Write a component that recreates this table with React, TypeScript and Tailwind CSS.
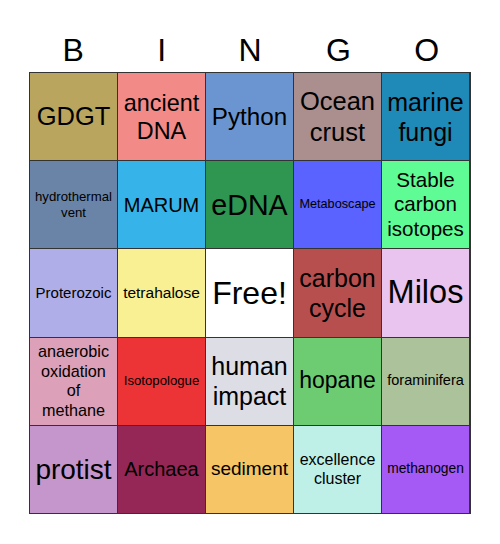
import React from 'react';

type Cell = { text: string; bg: string; size: string };

const cells: Cell[] = [
  { text: 'GDGT', bg: 'bg-[#b9a55d]', size: 'text-[25.5px]' },
  { text: 'ancient DNA', bg: 'bg-[#f28a87]', size: 'text-[23.4px]' },
  { text: 'Python', bg: 'bg-[#6a95d0]', size: 'text-[24.2px]' },
  { text: 'Ocean crust', bg: 'bg-[#ab8f8f]', size: 'text-[25.5px]' },
  { text: 'marine fungi', bg: 'bg-[#1f8ab8]', size: 'text-[25px]' },

  { text: 'hydrothermal vent', bg: 'bg-[#6a84a8]', size: 'text-[13.2px]' },
  { text: 'MARUM', bg: 'bg-[#36b3e8]', size: 'text-[20px]' },
  { text: 'eDNA', bg: 'bg-[#2e9650]', size: 'text-[28.6px]' },
  { text: 'Metaboscape', bg: 'bg-[#5a62ff]', size: 'text-[12.7px]' },
  { text: 'Stable carbon isotopes', bg: 'bg-[#5ffc96]', size: 'text-[20.6px]' },

  { text: 'Proterozoic', bg: 'bg-[#afaee8]', size: 'text-[15px]' },
  { text: 'tetrahalose', bg: 'bg-[#f9ef93]', size: 'text-[15.5px]' },
  { text: 'Free!', bg: 'bg-white', size: 'text-[32px]' },
  { text: 'carbon cycle', bg: 'bg-[#b84f4f]', size: 'text-[25px]' },
  { text: 'Milos', bg: 'bg-[#e8c4ee]', size: 'text-[32.5px]' },

  { text: 'anaerobic\noxidation\nof\nmethane', bg: 'bg-[#dca0b8]', size: 'text-[16.2px]' },
  { text: 'Isotopologue', bg: 'bg-[#ec3336]', size: 'text-[13.2px]' },
  { text: 'human impact', bg: 'bg-[#dddde6]', size: 'text-[25px]' },
  { text: 'hopane', bg: 'bg-[#6dcc72]', size: 'text-[23px]' },
  { text: 'foraminifera', bg: 'bg-[#abc29a]', size: 'text-[14.5px]' },

  { text: 'protist', bg: 'bg-[#c496cc]', size: 'text-[28px]' },
  { text: 'Archaea', bg: 'bg-[#952756]', size: 'text-[20px]' },
  { text: 'sediment', bg: 'bg-[#f5c566]', size: 'text-[19px]' },
  { text: 'excellence cluster', bg: 'bg-[#bff0e8]', size: 'text-[16px]' },
  { text: 'methanogen', bg: 'bg-[#a55af5]', size: 'text-[13.8px]' },
];

const App: React.FC = () => {
  return (
    <div className="w-[500px] h-[544px] bg-white font-['Liberation_Sans',Arial,sans-serif] text-black">
      <div className="ml-[29px] w-[442px] pt-[32px]">
        {/* Header letters */}
        <div className="grid grid-cols-5 h-[40px] text-[32px] leading-[37px] text-center">
          {['B', 'I', 'N', 'G', 'O'].map((l) => (
            <div key={l}>{l}</div>
          ))}
        </div>

        {/* Board */}
        <div className="grid grid-cols-[repeat(5,87px)] grid-rows-[repeat(5,87.2px)] gap-px p-px bg-[#333]">
          {cells.map((c) => (
            <div
              key={c.text}
              className={`${c.bg} ${c.size} flex items-center justify-center text-center leading-[1.2] px-[2px] overflow-hidden whitespace-pre-line`}
            >
              <span>{c.text}</span>
            </div>
          ))}
        </div>
      </div>
    </div>
  );
};

export default App;
